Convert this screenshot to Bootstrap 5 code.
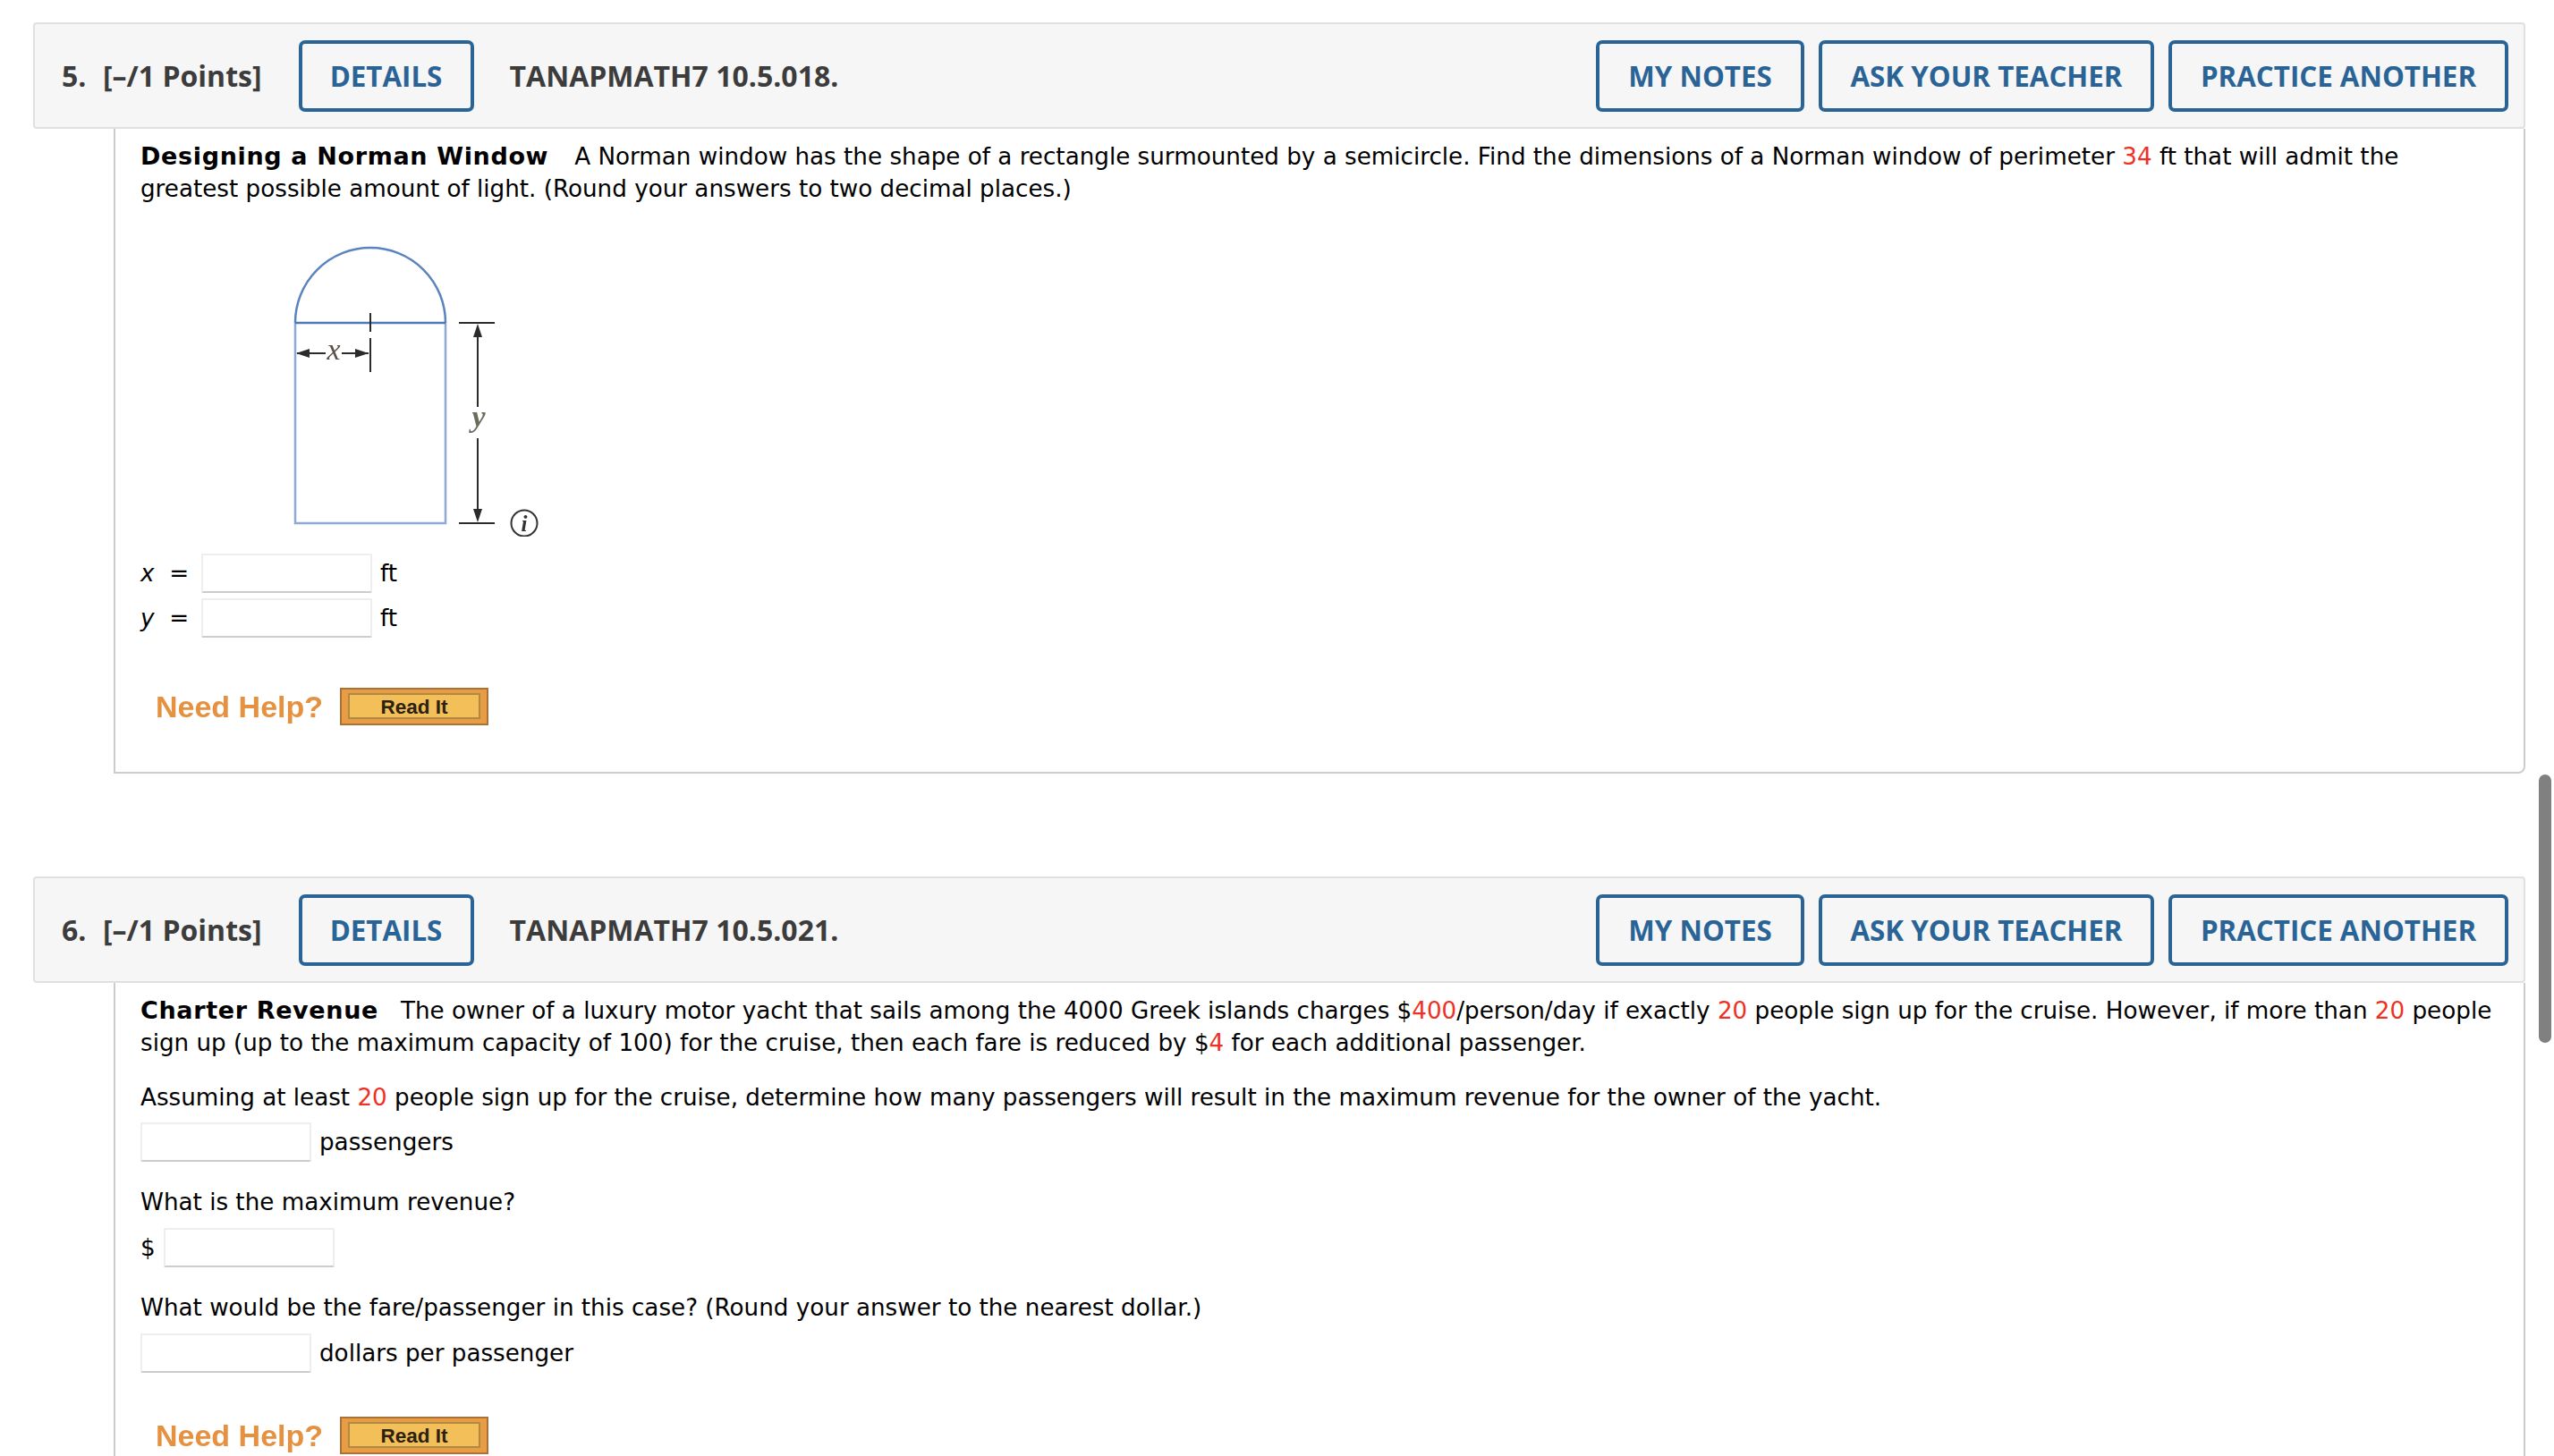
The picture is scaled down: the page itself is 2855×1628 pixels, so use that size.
<!DOCTYPE html>
<html lang="en"><head><meta charset="utf-8"><title>Questions</title>
<link href="https://cdn.jsdelivr.net/npm/bootstrap@5.3.0/dist/css/bootstrap.min.css" rel="stylesheet">
<style>
html,body{height:1628px;overflow:hidden;background:#fff}
body{font-family:"DejaVu Sans",sans-serif;font-size:26.2px;line-height:36px;color:#000}
b{font-size:27px;letter-spacing:.65px}
.lead-gap{margin-right:4px}
.sheet{padding:25px 32px 0 37px;position:relative;height:1628px}
.qhead{background:#f6f6f6;border:2px solid #e0e0e0;border-radius:4px;height:119px;padding:0 17px 0 30px;color:#3c3c3c;font-family:"Open Sans",sans-serif;font-weight:700;font-size:32px;line-height:40px}
.qnum{width:46px}
.qpts{margin-right:41px}
.qbtn{border:4px solid #2a6496;border-radius:7px;color:#2a6496;background:transparent;height:80px;font:700 31.3px/40px "Open Sans",sans-serif;padding:0;display:flex;align-items:center;justify-content:center;text-transform:uppercase}
.w-det{width:196px;margin-right:40px}
.w-notes{width:233px}.w-ask{width:375px}.w-prac{width:380px}
.qbody{margin-left:90px;border:2px solid #ccc;border-top:0;padding:13px 30px 0 28px}
.q5{height:721px;border-radius:0 0 8px 0;margin-bottom:115px}
.q6{height:600px}
.qbody p{margin:0}
.hot{color:#ee3124}
.ans{display:inline-block;width:191px;height:44px;background:#fff;border:2px solid #eee;border-bottom-color:#ccc;border-radius:2px;vertical-align:middle}
.fig{display:block;margin-top:41px;filter:blur(.45px)}
.eqrow{height:50px;display:flex;align-items:center}
.eqfirst{margin-top:16px}
.eqlab{width:68px;white-space:pre}
.gap9{margin-left:9px}
.helpline{display:flex;align-items:center}
.needhelp{font:700 34px/42px "Liberation Sans",sans-serif;color:#e59140;margin:0 20px 0 17px;width:186px;white-space:nowrap;filter:blur(.5px)}
.readit{width:166px;height:42px;background:#e89c43;border:2px solid #a8733a;padding:4px 7px 5px;display:flex}
.readit span{flex:1;background:#f2bf58;border:2px solid #b08a45;padding-top:2px;font:700 22.5px/24px "Liberation Sans",sans-serif;color:#2b2213;text-align:center}
.sbar{position:absolute;left:2838px;top:866px;width:14px;height:300px;border-radius:7px;background:#808080}
.mt-a{margin-top:25px!important}
.mt-s{margin-top:24px!important}
.r1{margin-top:7px}
.r2{margin-top:8px}
.h-help5{margin-top:53px}
.h-help6{margin-top:46px}
</style></head><body>
<div class="sheet">
 <section>
  <div class="qhead d-flex align-items-center">
   <span class="qnum">5.</span><span class="qpts">[–/1 Points]</span>
   <button class="qbtn w-det">Details</button>
   <span>TANAPMATH7 10.5.018.</span>
   <div class="ms-auto d-flex gap-3">
    <button class="qbtn w-notes">My Notes</button><button class="qbtn w-ask">Ask Your Teacher</button><button class="qbtn w-prac">Practice Another</button>
   </div>
  </div>
  <div class="qbody q5">
   <p><b class="lead-gap">Designing a Norman Window</b> &nbsp; A Norman window has the shape of a rectangle surmounted by a semicircle. Find the dimensions of a Norman window of perimeter <span class="hot">34</span> ft that will admit the<br>greatest possible amount of light. (Round your answers to two decimal places.)</p>
   <svg class="fig" width="460" height="330" viewBox="157 270 460 330" role="img" aria-label="Norman window diagram">
    <g fill="none" stroke="#6a8fc8" stroke-width="2.5">
     <path d="M330 361V585H498V361" stroke="#8ea9d3"/>
     <path d="M330 361A84 84 0 0 1 498 361" stroke="#5b84bf"/>
     <path d="M330 361H498" stroke="#4b7abb"/>
    </g>
    <g stroke="#2b2b2b" stroke-width="2" fill="none">
     <path d="M414 350V371M414 378V416"/>
     <path d="M332 395H364M382 395H412"/>
     <path d="M513 361H553M513 585H553"/>
     <path d="M534 366V455M534 490V580"/>
    </g>
    <g fill="#2b2b2b">
     <path d="M331 395L346 390V400Z M412 395L397 390V400Z"/>
     <path d="M534 362L529 377H539Z M534 584L529 569H539Z"/>
    </g>
    <text x="373" y="402" text-anchor="middle" font-family="Liberation Serif" font-style="italic" font-size="34" fill="#5a5048">x</text>
    <text x="535" y="477" text-anchor="middle" font-family="Liberation Serif" font-style="italic" font-weight="700" font-size="34" fill="#6c6c5c">y</text>
    <circle cx="586" cy="585" r="14.5" fill="none" stroke="#333" stroke-width="2"/>
    <text x="586" y="594" text-anchor="middle" font-family="Liberation Serif" font-style="italic" font-weight="700" font-size="25" fill="#333">i</text>
   </svg>
   <div class="eqrow eqfirst"><span class="eqlab"><i>x</i>  =</span><span class="ans"></span><span class="gap9">ft</span></div>
   <div class="eqrow"><span class="eqlab"><i>y</i>  =</span><span class="ans"></span><span class="gap9">ft</span></div>
   <div class="helpline h-help5"><span class="needhelp">Need Help?</span><span class="readit"><span>Read It</span></span></div>
  </div>
 </section>
 <section>
  <div class="qhead d-flex align-items-center">
   <span class="qnum">6.</span><span class="qpts">[–/1 Points]</span>
   <button class="qbtn w-det">Details</button>
   <span>TANAPMATH7 10.5.021.</span>
   <div class="ms-auto d-flex gap-3">
    <button class="qbtn w-notes">My Notes</button><button class="qbtn w-ask">Ask Your Teacher</button><button class="qbtn w-prac">Practice Another</button>
   </div>
  </div>
  <div class="qbody q6">
   <p><b>Charter Revenue</b> &nbsp; The owner of a luxury motor yacht that sails among the 4000 Greek islands charges $<span class="hot">400</span>/person/day if exactly <span class="hot">20</span> people sign up for the cruise. However, if more than <span class="hot">20</span> people sign up (up to the maximum capacity of 100) for the cruise, then each fare is reduced by $<span class="hot">4</span> for each additional passenger.</p>
   <p class="mt-a">Assuming at least <span class="hot">20</span> people sign up for the cruise, determine how many passengers will result in the maximum revenue for the owner of the yacht.</p>
   <div class="eqrow r1"><span class="ans"></span><span class="gap9">passengers</span></div>
   <p class="mt-s">What is the maximum revenue?</p>
   <div class="eqrow r2">$<span class="ans gap9"></span></div>
   <p class="mt-s">What would be the fare/passenger in this case? (Round your answer to the nearest dollar.)</p>
   <div class="eqrow r2"><span class="ans"></span><span class="gap9">dollars per passenger</span></div>
   <div class="helpline h-help6"><span class="needhelp">Need Help?</span><span class="readit"><span>Read It</span></span></div>
  </div>
 </section>
 <div class="sbar"></div>
</div>
<script src="https://cdn.jsdelivr.net/npm/bootstrap@5.3.0/dist/js/bootstrap.bundle.min.js"></script>
</body></html>
